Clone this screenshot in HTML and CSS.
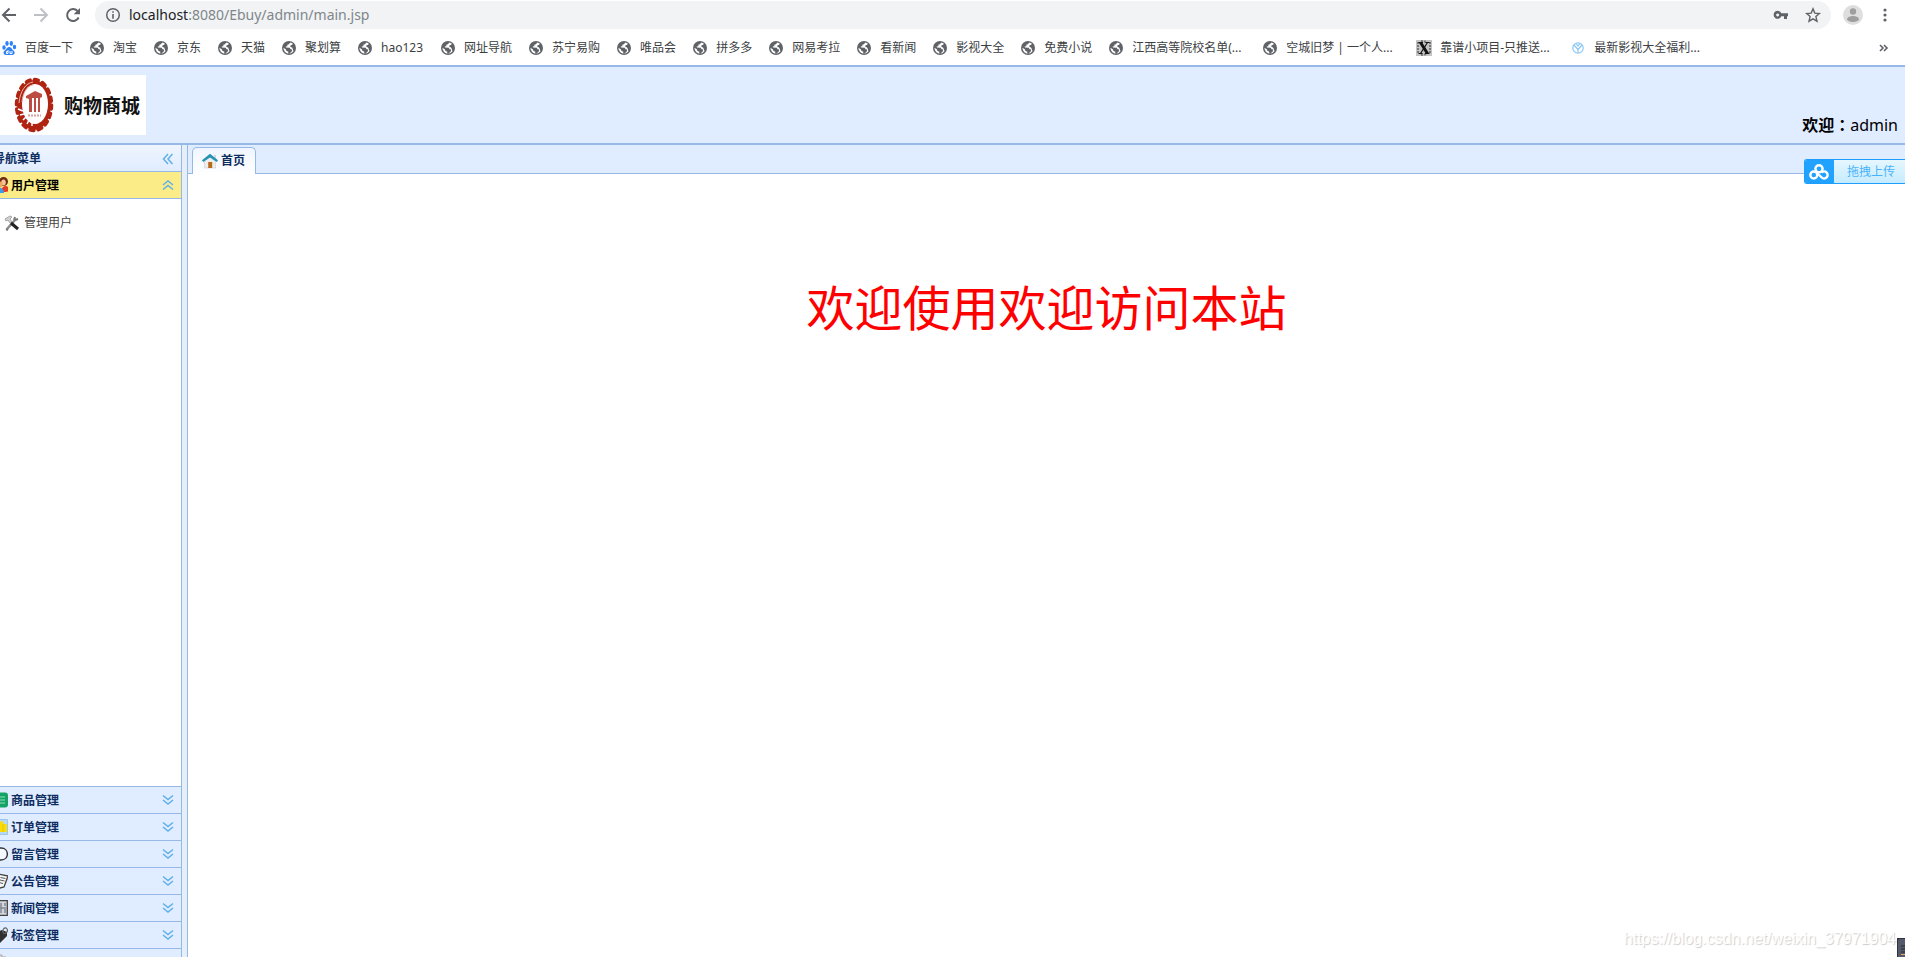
FILE: index.html
```html
<!DOCTYPE html>
<html lang="zh-CN">
<head>
<meta charset="utf-8">
<title>购物商城</title>
<link rel="stylesheet" href="styles.css">
</head>
<body>
<svg class="defs" width="0" height="0" aria-hidden="true">
  <symbol id="globe" viewBox="0 0 16 16"><circle cx="8" cy="8" r="7" fill="#5f6368"/><path d="M9.500 2.500 7.500 4.500 6.500 4.600 6.300 6.300 4.700 6.600 5 7.600 8.800 7.700 9.600 9.200 11.200 9.400 10.700 11.500 8.500 13.500 7.200 13.600 7.300 11.800 5.300 10.800 5 9.500 2.500 7.800 2.700 9.600 4 12 6 13.300 8 13.700 10.500 13 12.500 11.200 11.400 8 9.800 6.800 9 6.600 9.400 5.400 11.500 4.600 11.700 3.500Z" fill="#fff"/></symbol>
  <symbol id="down" viewBox="0 0 12 12"><path d="m1 1.500 5 4 5-4M1 6l5 4 5-4" fill="none" stroke="#5fb0e8" stroke-width="1.500"/></symbol>
</svg>

<div class="toolbar">
  <button class="nav" aria-label="后退"><svg width="16" height="16" viewBox="0 0 16 16"><path d="M15 8H2.500M8.500 1.500 2 8l6.500 6.500" fill="none" stroke="#5f6368" stroke-width="2"/></svg></button>
  <button class="nav" aria-label="前进"><svg width="16" height="16" viewBox="0 0 16 16"><path d="M1 8h12.500M7.500 1.500 14 8l-6.500 6.500" fill="none" stroke="#bdc1c6" stroke-width="2"/></svg></button>
  <button class="nav" aria-label="重新加载"><svg width="16" height="16" viewBox="0 0 16 16"><path d="M13.600 10.500A6 6 0 1 1 12.500 4" fill="none" stroke="#5f6368" stroke-width="2"/><path d="M15 1v6.300H8.700Z" fill="#5f6368"/></svg></button>
  <div class="address">
    <svg width="16" height="16" viewBox="0 0 16 16"><circle cx="8" cy="8" r="6.300" fill="none" stroke="#5f6368" stroke-width="1.500"/><path d="M8 4.200v1.600M8 7v4.800" stroke="#5f6368" stroke-width="1.600"/></svg>
    <span class="url"><span class="host">localhost</span>:8080/Ebuy/admin/main.jsp</span>
    <svg width="16" height="16" viewBox="0 0 16 16"><path fill-rule="evenodd" d="M8.300 6.300H15v3h-1V12h-3V9.300H8.300A4 4 0 1 1 8.300 6.300ZM4.600 6.400a1.500 1.500 0 1 0 .1 0Z" fill="#5f6368"/></svg>
    <svg width="16" height="16" viewBox="0 0 16 16"><path d="m8 1.800 1.800 4.300 4.600.4-3.500 3.100 1.100 4.600L8 11.800l-4 2.400 1.100-4.600-3.500-3.100 4.600-.4Z" fill="none" stroke="#5f6368" stroke-width="1.400"/></svg>
  </div>
  <button class="avatar" aria-label="用户"><svg width="20" height="20" viewBox="0 0 20 20"><circle cx="10" cy="10" r="10" fill="#dedede"/><circle cx="10" cy="6.500" r="3.200" fill="#9e9e9e"/><ellipse cx="10" cy="14" rx="6" ry="3" fill="#9e9e9e"/></svg></button>
  <button class="more" aria-label="菜单"><svg width="4" height="16" viewBox="0 0 4 16"><g fill="#5f6368"><circle cx="2" cy="3" r="1.600"/><circle cx="2" cy="8" r="1.600"/><circle cx="2" cy="13" r="1.600"/></g></svg></button>
</div>

<nav class="bookmarks">
  <a href="#"><svg viewBox="0 0 16 16"><g fill="#2e82f6"><ellipse cx="3" cy="7.500" rx="1.700" ry="2.300"/><ellipse cx="6" cy="3.500" rx="1.700" ry="2.400"/><ellipse cx="10.300" cy="3.500" rx="1.700" ry="2.400"/><ellipse cx="13.500" cy="7" rx="1.700" ry="2.300"/><path d="M8 7c2.500 0 3 2.500 4.700 3.800 1.800 1.700 1 4.200-1.400 4.200H5c-2.600 0-3.200-2.700-1.500-4.200C5.300 9.500 5.800 7 8 7Z"/></g><path d="M7 10v3.500H5.500v-2H7M9 11v2.500h2V11" fill="none" stroke="#fff"/></svg><span>百度一下</span></a>
  <a href="#"><svg><use href="#globe"/></svg><span>淘宝</span></a>
  <a href="#"><svg><use href="#globe"/></svg><span>京东</span></a>
  <a href="#"><svg><use href="#globe"/></svg><span>天猫</span></a>
  <a href="#"><svg><use href="#globe"/></svg><span>聚划算</span></a>
  <a href="#"><svg><use href="#globe"/></svg><span class="latin">hao123</span></a>
  <a href="#"><svg><use href="#globe"/></svg><span>网址导航</span></a>
  <a href="#"><svg><use href="#globe"/></svg><span>苏宁易购</span></a>
  <a href="#"><svg><use href="#globe"/></svg><span>唯品会</span></a>
  <a href="#"><svg><use href="#globe"/></svg><span>拼多多</span></a>
  <a href="#"><svg><use href="#globe"/></svg><span>网易考拉</span></a>
  <a href="#"><svg><use href="#globe"/></svg><span>看新闻</span></a>
  <a href="#"><svg><use href="#globe"/></svg><span>影视大全</span></a>
  <a href="#"><svg><use href="#globe"/></svg><span>免费小说</span></a>
  <a href="#"><svg><use href="#globe"/></svg><span class="long">江西高等院校名单(...</span></a>
  <a href="#"><svg><use href="#globe"/></svg><span class="long">空城旧梦 | 一个人...</span></a>
  <a href="#"><svg viewBox="0 0 16 16"><path d="M0 0h16v16H0Z" fill="#c4c4c4"/><path d="M2 2v12M14 2v12M5 1l6 1M5 15l6-1" stroke="#777" stroke-width="2" stroke-dasharray="2 1"/><path d="m4.500 2.500 7 11" stroke="#111" stroke-width="3"/><path d="m11.500 2.500-7 11M2.500 2.500H7M9.500 2.500h4M2.500 13.500h4M9 13.500h4.500" stroke="#111" stroke-width="1.200"/></svg><span class="long">靠谱小项目-只推送...</span></a>
  <a href="#"><svg viewBox="0 0 16 16"><g fill="none" stroke="#8cc8f5" stroke-width="1.200"><circle cx="8" cy="8" r="5.200"/><path d="m4 5 4 4.500L12 5M8 9.500V13M6 3.500l2 2.500 2-2.500"/></g></svg><span>最新影视大全福利...</span></a>
  <button class="overflow" aria-label="更多书签"><svg width="10" height="8" viewBox="0 0 10 8"><path d="m1 1 3 3-3 3M5 1l3 3-3 3" fill="none" stroke="#5f6368" stroke-width="1.600"/></svg></button>
</nav>

<header class="header">
  <div class="logo">
    <svg width="40" height="56" viewBox="0 0 40 56">
      <ellipse cx="20" cy="28" rx="17" ry="25" fill="#b02412"/>
      <ellipse cx="20" cy="28" rx="17.500" ry="25.500" fill="none" stroke="#b02412" stroke-width="3.500" stroke-linecap="round" stroke-dasharray="4 4.500"/>
      <ellipse cx="21" cy="27" rx="13" ry="20" fill="#fff"/>
      <path d="M5 26C6 14 12 6 19 5M8 25C9 16 13 9 19 8" fill="none" stroke="#e9b5ae"/>
      <path d="M4 32l5 2M6 38l4-1M9 43l3-3M13 47l2-4M18 49v-4" stroke="#fff" stroke-width="1.500"/>
      <path d="M35 33c-1 7-5 12-10 14" fill="none" stroke="#b02412" stroke-width="2" stroke-dasharray="2 2"/>
      <path d="m12 19 9-5 7 3v3l-2 1v14h-2V21h-2v14h-2V21h-2v14h-3V22l-3-1Z" fill="#bd4d43"/>
      <path d="M14 38.500h13" stroke="#d8a09a" stroke-width="2" stroke-dasharray="2 1"/>
    </svg>
    <span>购物商城</span>
  </div>
  <p class="welcome"><strong>欢迎<span class="colon" lang="zh-TW">：</span></strong>admin</p>
</header>

<div class="layout">
  <aside class="sidebar">
    <div class="side-title"><span>导航菜单</span><button aria-label="折叠"><svg width="12" height="12" viewBox="0 0 12 12"><path d="M6 1 1.500 6 6 11M10.500 1 6 6l4.500 5" fill="none" stroke="#5fb0e8" stroke-width="1.500"/></svg></button></div>
    <button class="acc open"><svg class="ico" viewBox="0 0 16 16"><circle cx="11.500" cy="4.500" r="4.500" fill="#6b2a12"/><ellipse cx="11.500" cy="5.500" rx="2.300" ry="3" fill="#f8c295"/><path d="M9 15c0-7 8-8 8-2 0 2-3 2-8 2Z" fill="#e83b25"/><circle cx="7.500" cy="7.500" r="3" fill="#f0a860"/><path d="M2 16c0-7 10-7 10 0Z" fill="#3c9be8"/></svg><span>用户管理</span><svg class="chev flip"><use href="#down"/></svg></button>
    <div class="acc-body">
      <a href="#"><svg width="16" height="16" viewBox="0 0 16 16"><path d="M3 14 11 5" stroke="#8b8b8b" stroke-width="2.500"/><path d="m2 14 2 1M10 5l1-3M11 5l3-1" stroke="#777" stroke-width="2"/><path d="m1 4 5-3 2 1-2 2 2 3-2 1-2-3-2 1Z" fill="#d4d4d4" stroke="#888" stroke-width=".7"/><path d="m7 8 7 6" stroke="#222" stroke-width="3"/></svg><span>管理用户</span></a>
    </div>
    <button class="acc"><svg class="ico" viewBox="0 0 16 16"><rect width="16" height="15" y=".5" rx="3" fill="#14a364"/><path d="M4 5h9M4 8h9M4 11h9" stroke="#8fe0b8"/></svg><span>商品管理</span><svg class="chev"><use href="#down"/></svg></button>
    <button class="acc"><svg class="ico" viewBox="0 0 16 16"><path d="M0 .5h15.500v15H0Z" fill="#b5d9f5" stroke="#9cc6ea"/><path d="M3 4h5V2.500h3.500V5H15v8H3Z" fill="#f9dd08"/><path d="M11 5v8" stroke="#e8c400"/></svg><span>订单管理</span><svg class="chev"><use href="#down"/></svg></button>
    <button class="acc"><svg class="ico" viewBox="0 0 16 16"><path d="M5 2h4c8.500 0 8.500 12 0 12H5" fill="#f4f8fe" stroke="#333" stroke-width="1.400"/></svg><span>留言管理</span><svg class="chev"><use href="#down"/></svg></button>
    <button class="acc"><svg class="ico" viewBox="0 0 16 16"><path d="m6 1 10 2-4 11-4 1-4-2Z" fill="#f7f7f7" stroke="#444" stroke-width="1.300"/><path d="m8.500 4.500 5 1M8 7l4.500 1M7 9.500l4 1" stroke="#555"/></svg><span>公告管理</span><svg class="chev"><use href="#down"/></svg></button>
    <button class="acc"><svg class="ico" viewBox="0 0 16 16"><path d="M1 .7h14.300v14.600H1Z" fill="#d2d5da" stroke="#444" stroke-width="1.300"/><path d="M9 3v10M13 3v3M13 9v4M5 4v8M8 8h6" stroke="#838995" stroke-width="1.500"/></svg><span>新闻管理</span><svg class="chev"><use href="#down"/></svg></button>
    <button class="acc"><svg class="ico" viewBox="0 0 16 16"><path d="m2 6 8-3 5 2v4l-7 7-5-2Z" fill="#303030"/><path d="M12 7c-3-4 1-8 3-5s-1 3-2 5" fill="none" stroke="#666" stroke-width="1.200"/></svg><span>标签管理</span><svg class="chev"><use href="#down"/></svg></button>
    <div class="acc last"><svg class="ico" viewBox="0 0 16 16"><path d="M6 15V1h4v2h4v12Z" fill="#d8d8d8" stroke="#aaa"/></svg></div>
  </aside>
  <main class="main">
    <div class="tabs">
      <button class="tab"><svg width="16" height="16" viewBox="0 0 16 16"><path d="M12 2h2v4h-2Z" fill="#d8d8d8"/><path d="M2.500 8 8 3l5.500 5v7h-11Z" fill="#eee" stroke="#ccc" stroke-width=".6"/><path d="M6.200 9h4v6h-4Z" fill="#b8691d"/><path d="M8 .8 16 7.200 14.800 9 8 4.500 1.200 9 0 7.200Z" fill="#2593b5"/></svg><span>首页</span></button>
    </div>
    <div class="content"><h1>欢迎使用欢迎访问本站</h1></div>
  </main>
</div>

<button class="upload"><span class="cloud"><svg width="20" height="16" viewBox="0 0 20 16"><g fill="none" stroke="#fff" stroke-width="2.400"><circle cx="10" cy="4.800" r="3.600"/><circle cx="4.800" cy="11" r="3.500"/><path d="M12.700 8.500a3.500 3.500 0 1 1 0 5L7.500 8.500"/></g></svg></span><span class="upload-text">拖拽上传</span></button>
<div class="watermark">https://blog.csdn.net/weixin_37971904</div>
<div class="widget"><svg width="8" height="19" viewBox="0 0 8 19"><path d="M8 0H3Q0 0 0 3v16h8Z" fill="#555a6a"/><path d="M0 19V3q0-3 3-3h5" fill="none" stroke="#30343f" stroke-width="2"/><path d="M4 8h4M4 11h4M4 14h4" stroke="#252934"/><path d="M4 16.500h4" stroke="#f0a45a"/></svg></div>
</body>
</html>
```

FILE: styles.css
```css
* { box-sizing: border-box; }
html, body { height: 100%; }
body {
  margin: 0;
  display: flex;
  flex-direction: column;
  overflow: hidden;
  background: #fff;
  font: 12px/16px "Noto Sans", "Noto Sans CJK SC", sans-serif;
  color: #3c4043;
}
button { border: 0; padding: 0; margin: 0; background: none; font: inherit; color: inherit; }
a { color: inherit; text-decoration: none; }
svg { display: block; flex: none; }
.defs { position: absolute; }

.toolbar { flex: none; display: flex; align-items: center; height: 29px; padding: 1px 18px 0 1px; }
.nav { width: 16px; margin-right: 16px; }
.nav:nth-child(3) { margin-right: 14px; }
.address {
  flex: 1;
  display: flex;
  align-items: center;
  gap: 16px;
  height: 28px;
  padding: 0 10px;
  border-radius: 14px;
  background: #f1f3f4;
}
.url { flex: 1; margin-left: -8px; font-size: 14px; line-height: 20px; color: #80868b; }
.host { color: #202124; }
.avatar { margin-left: 12px; }
.more { margin-left: 20px; }

.bookmarks { flex: none; display: flex; align-items: center; gap: 16px; height: 36px; padding: 1px 16px 0 1px; white-space: nowrap; }
.bookmarks a { display: flex; align-items: center; gap: 8px; }
.bookmarks svg { width: 16px; height: 16px; }
.bookmarks span { padding-top: 1px; }
.latin { min-width: 43px; }
.long { width: 114px; }
.overflow { margin-left: auto; }
.bookmarks .overflow svg { width: 10px; height: 8px; }

.header {
  flex: none;
  display: flex;
  justify-content: space-between;
  height: 80px;
  border-top: 2px solid #95b8e7;
  border-bottom: 2px solid #95b8e7;
  background: #e0ecff;
}
.logo {
  display: flex;
  align-items: center;
  width: 146px;
  height: 60px;
  margin-top: 8px;
  padding-left: 14px;
  gap: 10px;
  background: #fff;
  color: #111;
  font: bold 19px/24px "Noto Sans CJK SC", sans-serif;
  white-space: nowrap;
}
.welcome { align-self: flex-end; margin: 0 7px 6px 0; font-size: 16px; line-height: 24px; color: #000; }
.colon { font-family: "Noto Sans CJK TC", sans-serif; }

.layout { flex: 1; display: flex; min-height: 0; background: #e6eef8; }
.sidebar { flex: none; display: flex; flex-direction: column; width: 182px; border-right: 1px solid #95b8e7; background: #fff; overflow: hidden; }
.side-title {
  flex: none;
  display: flex;
  align-items: center;
  justify-content: space-between;
  height: 27px;
  padding: 1px 7px 0 0;
  border-bottom: 1px solid #95b8e7;
  background: linear-gradient(#eff5ff, #e0ecff);
  color: #0e2d5f;
  font-weight: bold;
}
.side-title span { margin-left: -7px; }
.acc {
  flex: none;
  display: flex;
  align-items: center;
  height: 27px;
  padding-right: 7px;
  border-top: 1px solid #95b8e7;
  background: #e0ecff;
  color: #0e2d5f;
  font-weight: bold;
  text-align: left;
}
.acc.open { border-top: 0; border-bottom: 1px solid #95b8e7; background: #fbec88; color: #000; }
.acc.last { height: 9px; align-items: flex-start; overflow: hidden; padding-top: 5px; }
.acc span { flex: 1; padding-top: 2px; }
.ico { width: 16px; height: 16px; margin: 0 3px 0 -8px; }
.chev { width: 12px; height: 12px; }
.flip { transform: scaleY(-1); }
.acc-body { flex: 1; padding: 16px 4px; }
.acc-body a { display: flex; align-items: center; gap: 4px; color: #444; }

.main { flex: 1; display: flex; flex-direction: column; margin-left: 5px; border-left: 1px solid #95b8e7; background: #fff; }
.tabs { flex: none; display: flex; align-items: flex-end; height: 29px; padding-left: 4px; border-bottom: 1px solid #95b8e7; background: #e0ecff; }
.tab {
  display: flex;
  align-items: center;
  gap: 3px;
  height: 27px;
  margin-bottom: -1px;
  padding: 0 10px 0 9px;
  border: 1px solid #95b8e7;
  border-bottom: 0;
  border-radius: 5px 5px 0 0;
  background: linear-gradient(#eff5ff, #fff);
  color: #0e2d5f;
  font-weight: bold;
}
.content { flex: 1; text-align: center; }
.content h1 { margin: 98px 0 0; font-size: 48px; line-height: 72px; font-weight: normal; color: #f00; }

.upload {
  position: absolute;
  top: 159px;
  right: 0;
  display: flex;
  height: 25px;
  border: 1px solid #1e9fff;
  border-right: 0;
  border-radius: 3px 0 0 3px;
  background: linear-gradient(#e6f7ff, #c5ebff);
  overflow: hidden;
  color: #4bb3fa;
}
.cloud { display: flex; align-items: center; justify-content: center; width: 29px; height: 23px; background: #22a2ff; }
.upload-text { padding: 0 10px 0 13px; line-height: 23px; }
.watermark {
  position: absolute;
  right: 9px;
  bottom: 8px;
  font: 16px/20px "Liberation Sans", sans-serif;
  color: #fff;
  text-shadow: 1px 1px 1px #ccc;
}
.widget { position: absolute; right: 0; bottom: 0; }
```
